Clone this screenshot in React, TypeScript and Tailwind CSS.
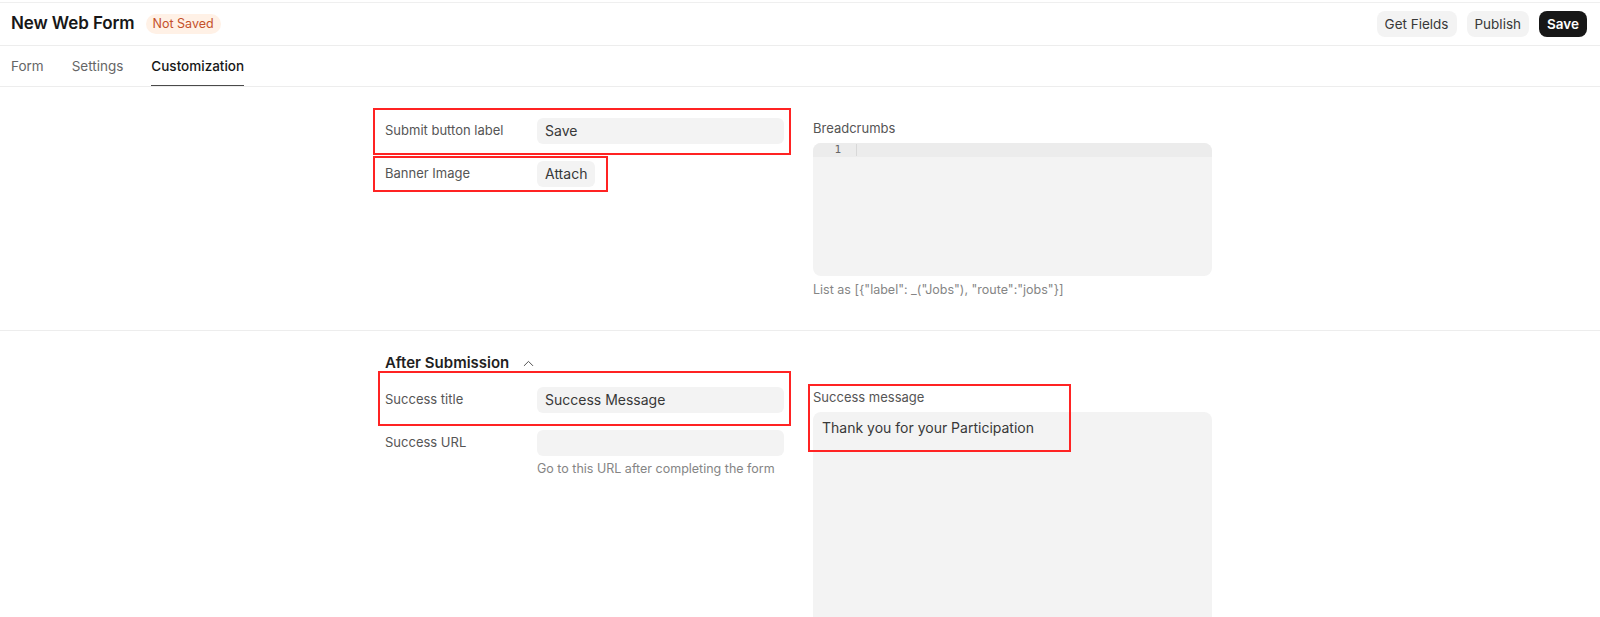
import { ChevronUp } from 'lucide-react'

// ─── ANNOTATION BOX ───────────────────────────────────────────────────────────
// Red highlight rectangle laid over a field (from the original screenshot).

function Mark({ className }: { className: string }) {
  return <div className={`pointer-events-none absolute border-2 border-[#ff2323] ${className}`} />
}

function FieldRow({
  label,
  children,
}: {
  label: string
  children: React.ReactNode
}) {
  return (
    <div className="flex items-start">
      <div className="w-[152px] shrink-0 h-[26px] flex items-center text-[13px] text-[#555]">{label}</div>
      <div className="flex-1">{children}</div>
    </div>
  )
}

function Input({ value }: { value?: string }) {
  return (
    <div className="h-[26px] w-full rounded-md bg-[#f3f3f3] px-2 flex items-center text-sm text-[#383838]">
      {value}
    </div>
  )
}

export default function App() {
  return (
    <div className="min-h-[617px] overflow-hidden bg-white text-[#171717]" style={{ fontFamily: 'Inter, "Noto Sans", sans-serif' }}>
      {/* ── HEADER ── */}
      <div className="mt-[2px] border-t border-[#efefef]" />
      <div className="h-[43px] flex items-center justify-between pl-[11px] pr-[13px] border-b border-[#ededed]">
        <div className="flex items-center gap-[11px]">
          <h1 className="text-[17px] font-semibold tracking-[-0.1px]">New Web Form</h1>
          <span className="h-5 px-[7px] rounded-full bg-[#fff1e6] text-[12.5px] text-[#c4502a] flex items-center">Not Saved</span>
        </div>
        <div className="flex items-center gap-[10px]">
          <button className="h-[26px] px-2 rounded-lg bg-[#f3f3f3] text-[13.5px] text-[#383838]">Get Fields</button>
          <button className="h-[26px] px-2 rounded-lg bg-[#f3f3f3] text-[13.5px] text-[#383838]">Publish</button>
          <button className="h-[26px] px-2 rounded-lg bg-[#171717] text-[13.5px] font-semibold text-white">Save</button>
        </div>
      </div>

      {/* ── TABS ── */}
      <div className="h-[41px] flex items-stretch gap-[28px] pl-[11px] border-b border-[#ededed]">
        <div className="flex items-center text-[13.5px] text-[#666]">Form</div>
        <div className="flex items-center text-[13.5px] text-[#666]">Settings</div>
        <div className="relative flex items-center text-[13.5px] font-medium text-[#171717]">
          Customization
          <div className="absolute left-0 right-0 bottom-0 h-px bg-[#4a4a4a]" />
        </div>
      </div>

      {/* ── SECTION: CUSTOMIZATION ── */}
      <div className="pt-[31px] pb-[30px] border-b border-[#ededed]">
        <div className="mx-auto w-[830px] grid grid-cols-[399px_399px] gap-x-[29px]">
          <div className="flex flex-col gap-[17px]">
            <div className="relative">
              <Mark className="-left-[12px] -top-[10px] w-[418px] h-[47px]" />
              <FieldRow label="Submit button label">
                <Input value="Save" />
              </FieldRow>
            </div>
            <div className="relative">
              <Mark className="-left-[12px] -top-[5px] w-[235px] h-[36px]" />
              <FieldRow label="Banner Image">
                <button className="h-[26px] px-2 rounded-md bg-[#f3f3f3] text-sm text-[#383838]">Attach</button>
              </FieldRow>
            </div>
          </div>

          <div>
            <div className="text-[13px] leading-5 text-[#555]">Breadcrumbs</div>
            <div className="mt-[5px] h-[133px] rounded-lg bg-[#f3f3f3] overflow-hidden">
              <div className="h-[14px] bg-[#ececec] flex items-center">
                <span className="w-[28px] text-right text-[11px] text-[#666]" style={{ fontFamily: '"DejaVu Sans Mono", monospace' }}>1</span>
                <span className="ml-[15px] h-[12px] w-px bg-[#d8d8d8]" />
              </div>
            </div>
            <div className="mt-[4px] text-[12.5px] leading-5 text-[#858585]">List as [{'{'}"label": _("Jobs"), "route":"jobs"{'}'}]</div>
          </div>
        </div>
      </div>

      {/* ── SECTION: AFTER SUBMISSION ── */}
      <div className="pt-[22px]">
        <div className="mx-auto w-[830px]">
          <div className="flex items-center gap-[11px] h-5">
            <h2 className="text-[15px] font-semibold text-[#1f1f1f]">After Submission</h2>
            <ChevronUp size={17} strokeWidth={1.3} className="text-[#444]" />
          </div>

          <div className="mt-[14px] grid grid-cols-[399px_399px] gap-x-[29px]">
            <div className="flex flex-col gap-[17px]">
              <div className="relative">
                <Mark className="-left-[7px] -top-[16px] w-[413px] h-[55px]" />
                <FieldRow label="Success title">
                  <Input value="Success Message" />
                </FieldRow>
              </div>
              <div>
                <FieldRow label="Success URL">
                  <Input />
                  <div className="mt-[3px] text-[12.5px] leading-5 text-[#858585]">Go to this URL after completing the form</div>
                </FieldRow>
              </div>
            </div>

            <div className="relative">
              <Mark className="-left-[5px] -top-[3px] w-[263px] h-[68px]" />
              <div className="text-[13px] leading-5 text-[#555]">Success message</div>
              <div className="mt-[5px] h-[220px] rounded-lg bg-[#f3f3f3] px-[9px] pt-[6px]">
                <p className="text-sm leading-5 text-[#383838]">Thank you for your Participation</p>
              </div>
            </div>
          </div>
        </div>
      </div>
    </div>
  )
}
